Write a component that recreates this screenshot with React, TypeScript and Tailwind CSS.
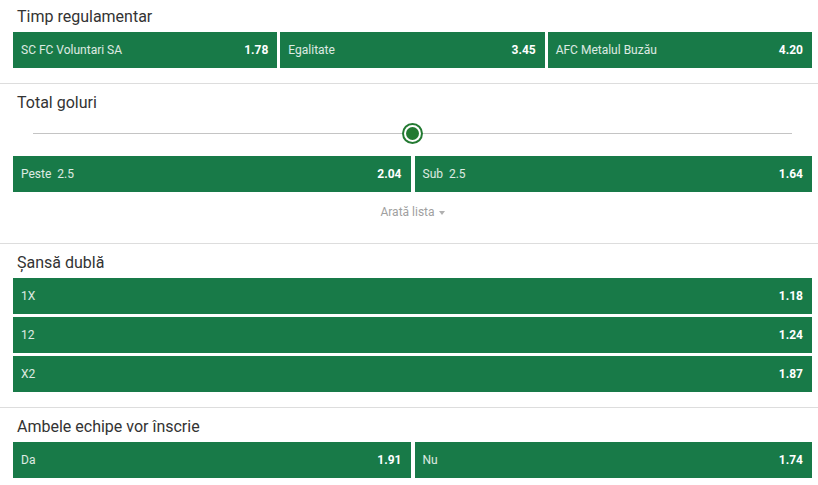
type Pick = { label: string; odd: string };

function OddButton({ label, odd, full }: Pick & { full?: boolean }) {
  return (
    <div className={(full ? 'w-full' : 'flex-1') + ' h-9 shrink-0 bg-[#187a48] flex items-center justify-between pl-[8px] pr-[9px]'}>
      <span className="text-[12px] text-white/85 whitespace-pre">{label}</span>
      <span className="text-[12px] font-bold text-white">{odd}</span>
    </div>
  );
}

function Section({ title, children, first, last }: { title: string; children: React.ReactNode; first?: boolean; last?: boolean }) {
  return (
    <section className={last ? '' : 'border-b border-[#dddddd]'}>
      <h2 className={(first ? 'pt-[6px]' : 'pt-[8px]') + ' px-[17px] pb-[5px] text-[16px] leading-[21px] text-[#333333]'}>{title}</h2>
      {children}
    </section>
  );
}

export default function App() {
  return (
    <div className="w-[818px] h-[485px] bg-white overflow-hidden font-['Roboto','Liberation_Sans',sans-serif]">
      <Section title="Timp regulamentar" first>
        <div className="flex gap-[3px] pl-[13px] pr-[6px] pb-[15px]">
          <OddButton label="SC FC Voluntari SA" odd="1.78" />
          <OddButton label="Egalitate" odd="3.45" />
          <OddButton label="AFC Metalul Buzău" odd="4.20" />
        </div>
      </Section>

      <Section title="Total goluri">
        <div className="relative h-[38px] ml-[33px] mr-[26px]">
          <div className="absolute left-0 right-0 top-[15px] h-px bg-[#c4c4c4]" />
          <div className="absolute left-[369px] top-[5px] w-[21px] h-[21px] rounded-full bg-[#237a32] flex items-center justify-center">
            <div className="w-[17px] h-[17px] rounded-full bg-white flex items-center justify-center">
              <div className="w-[13px] h-[13px] rounded-full bg-[#237a32]" />
            </div>
          </div>
        </div>
        <div className="flex gap-[4px] pl-[13px] pr-[6px]">
          <OddButton label="Peste  2.5" odd="2.04" />
          <OddButton label="Sub  2.5" odd="1.64" />
        </div>
        <div className="flex items-center justify-center gap-[4px] h-[40px] mb-[11px] pl-[13px] pr-[6px] text-[12px] text-[#a0a0a0]">
          <span>Arată lista</span>
          <svg width="6" height="4" viewBox="0 0 6 4" className="mt-[1px]">
            <path d="M0 0 L6 0 L3 4 Z" fill="#b0b0b0" />
          </svg>
        </div>
      </Section>

      <Section title="Șansă dublă">
        <div className="flex flex-col gap-[3px] pl-[13px] pr-[6px] pb-[15px]">
          <OddButton label="1X" odd="1.18" full />
          <OddButton label="12" odd="1.24" full />
          <OddButton label="X2" odd="1.87" full />
        </div>
      </Section>

      <Section title="Ambele echipe vor înscrie" last>
        <div className="flex gap-[4px] pl-[13px] pr-[6px]">
          <OddButton label="Da" odd="1.91" />
          <OddButton label="Nu" odd="1.74" />
        </div>
      </Section>
    </div>
  );
}
